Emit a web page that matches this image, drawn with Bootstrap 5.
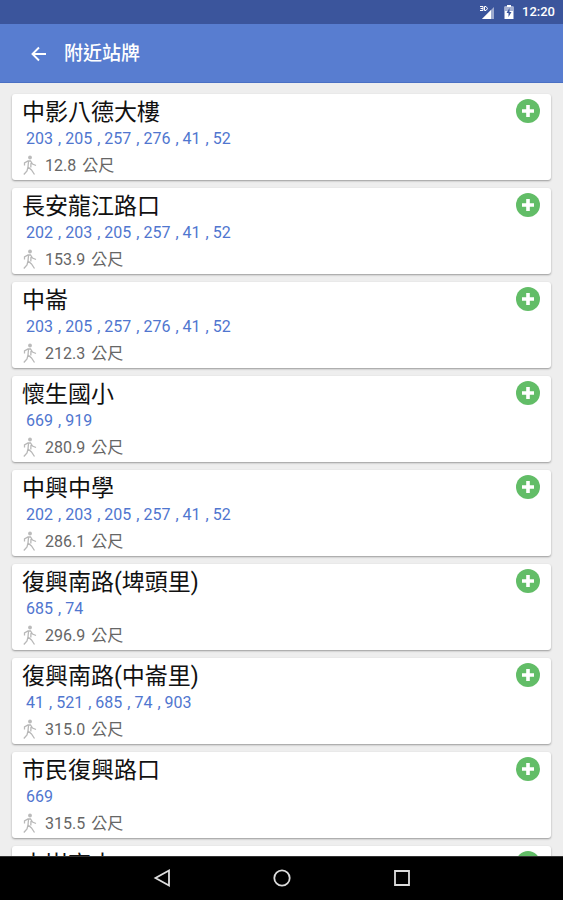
<!DOCTYPE html>
<html lang="zh-Hant">
<head>
<meta charset="utf-8">
<meta name="viewport" content="width=device-width, initial-scale=1">
<title>附近站牌</title>
<link href="https://cdn.jsdelivr.net/npm/bootstrap@5.3.0/dist/css/bootstrap.min.css" rel="stylesheet">
<style>
body { font-family: Roboto, "Noto Sans CJK TC", sans-serif; background: #eee; }
.status-bar { height: 24px; background: #3b559c; font-size: 13px; font-weight: 500; padding-right: 8px; }
.app-bar { height: 59px; background: #587dd0; padding: 1px 0 0 28px; gap: 14px; border-bottom: 1px solid #4a70c4; }
.app-bar h1 { font-size: 19px; font-weight: 500; line-height: 28px; }
.stop-list { padding: 11px 12px 0; gap: 8px; }
.stop { height: 86px; flex: none; border-radius: 3px; padding: 5px 11px 0 10px; box-shadow: 0 1px 2px rgba(0,0,0,.36); }
.stop h2 { font-size: 23px; font-weight: 400; line-height: 28px; color: #111; }
.routes { font-size: 16px; line-height: 24px; padding-left: 4px; }
.routes a { color: #5076cf; }
.routes span { color: #5076cf; margin: 0 4px 0 5px; }
.distance { font-size: 16px; line-height: 30px; color: #666; gap: 7px; }
.unit { margin-left: 6px; }
.add-btn { width: 24px; height: 24px; }
.nav-keys { height: 44px; background: #000; border-top: 1px solid #333; }
.nav-keys .btn { width: 120px; height: 42px; }
svg { display: block; flex: none; }
</style>
<script src="https://cdn.jsdelivr.net/npm/bootstrap@5.3.0/dist/js/bootstrap.bundle.min.js"></script>
</head>
<body class="vh-100 d-flex flex-column overflow-hidden">
<svg width="0" height="0" class="position-absolute" aria-hidden="true">
  <symbol id="walk" viewBox="0 0 16 22">
    <circle cx="8" cy="2.500" r="1.900" fill="#bbb"/>
    <path d="M2.500 10.500V8L6 6H8.500L10.500 9L14 10.500M6.500 6.500L6 12L9.500 15L12.500 19.500M6 12L5 16L1.800 19.500M9 8L8.800 12.500" fill="none" stroke="#b8b8b8" stroke-width="1.300"/>
  </symbol>
  <symbol id="plus" viewBox="0 0 24 24">
    <circle cx="12" cy="12" r="12" fill="#62bd67"/>
    <path d="M12 6V18M6 12H18" stroke="#fff" stroke-width="3.600"/>
  </symbol>
</svg>
<div class="status-bar d-flex align-items-center justify-content-end text-white flex-shrink-0">
  <svg width="17" height="15" viewBox="0 0 17 15" aria-hidden="true"><path d="M15 2V14H3Z" fill="#fff" fill-opacity=".5"/><path d="M12 5V14H3Z" fill="#fff"/><path d="M1 1.500H4V5.500H1M1.500 3.500H4M5.500 1.500H7L8.500 3.500L7 5.500H5.500Z" fill="none" stroke="#fff" stroke-width="1"/></svg>
  <svg class="mx-2" width="10" height="14" viewBox="0 0 10 14" aria-hidden="true"><path d="M3 0H7V1.500H9.500V14H.500V1.500H3Z" fill="#fff"/><path d="M1 2H9V6H1Z" fill="#a5b1d3"/><path d="M5.500 3L2.500 8H4.500V12L7.500 7H5.500Z" fill="#3b559c"/></svg>
  <span>12:20</span>
</div>
<header class="app-bar d-flex align-items-center text-white flex-shrink-0">
  <button type="button" class="btn p-0 border-0" aria-label="返回"><svg width="22" height="22" viewBox="0 0 22 22"><path d="M18 11H4.500M11 4.500L4.500 11L11 17.500" fill="none" stroke="#fff" stroke-width="1.900"/></svg></button>
  <h1 class="mb-0">附近站牌</h1>
</header>
<main class="stop-list flex-fill overflow-hidden d-flex flex-column" id="stops"></main>
<nav class="nav-keys d-flex justify-content-center flex-shrink-0" aria-label="系統導覽">
  <button type="button" class="btn p-0 border-0 d-flex align-items-center justify-content-center" aria-label="返回"><svg width="18" height="20" viewBox="0 0 18 20"><path d="M16 2.500V17.500L2.500 10Z" fill="none" stroke="#ddd" stroke-width="1.800"/></svg></button>
  <button type="button" class="btn p-0 border-0 d-flex align-items-center justify-content-center" aria-label="首頁"><svg width="20" height="20" viewBox="0 0 20 20"><circle cx="10" cy="10" r="7.700" fill="none" stroke="#ddd" stroke-width="1.800"/></svg></button>
  <button type="button" class="btn p-0 border-0 d-flex align-items-center justify-content-center" aria-label="最近使用"><svg width="18" height="18" viewBox="0 0 18 18"><path d="M2 2H16V16H2Z" fill="none" stroke="#ddd" stroke-width="1.800"/></svg></button>
</nav>
<script>
const stops = [
  ["中影八德大樓", [203, 205, 257, 276, 41, 52], "12.8"],
  ["長安龍江路口", [202, 203, 205, 257, 41, 52], "153.9"],
  ["中崙", [203, 205, 257, 276, 41, 52], "212.3"],
  ["懷生國小", [669, 919], "280.9"],
  ["中興中學", [202, 203, 205, 257, 41, 52], "286.1"],
  ["復興南路(埤頭里)", [685, 74], "296.9"],
  ["復興南路(中崙里)", [41, 521, 685, 74, 903], "315.0"],
  ["市民復興路口", [669], "315.5"],
  ["中崙高中", [], ""]
];
document.getElementById("stops").innerHTML = stops.map(([name, routes, metres]) => `
  <article class="stop bg-white">
    <div class="d-flex justify-content-between align-items-start">
      <h2 class="mb-0">${name}</h2>
      <button type="button" class="add-btn btn p-0 border-0 rounded-circle" aria-label="加入 ${name}"><svg width="24" height="24"><use href="#plus"/></svg></button>
    </div>
    <div class="routes d-flex">${routes.map(r => `<a href="#" class="text-decoration-none">${r}</a>`).join("<span>,</span>")}</div>
    ${metres ? `<div class="distance d-flex align-items-center"><svg width="16" height="22"><use href="#walk"/></svg><span>${metres}<span class="unit">公尺</span></span></div>` : ""}
  </article>`).join("");
</script>
</body>
</html>
